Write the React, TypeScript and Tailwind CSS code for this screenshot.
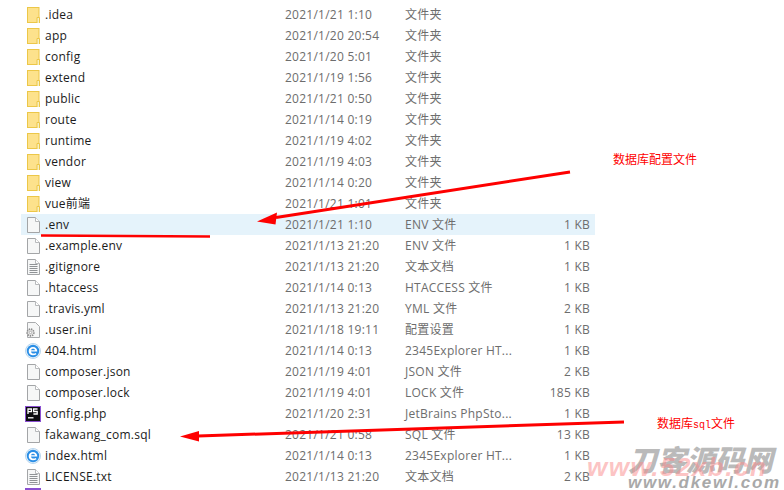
import type { ReactNode } from 'react';

type IconKind = 'folder' | 'blank' | 'text' | 'gear' | 'ie' | 'ps';

type FileRow = {
  name: string;
  date: string;
  type: string;
  size?: string;
  icon: IconKind;
};

const FOLDER = '文件夹';

const files: FileRow[] = [
  { name: '.idea', date: '2021/1/21 1:10', type: FOLDER, icon: 'folder' },
  { name: 'app', date: '2021/1/20 20:54', type: FOLDER, icon: 'folder' },
  { name: 'config', date: '2021/1/20 5:01', type: FOLDER, icon: 'folder' },
  { name: 'extend', date: '2021/1/19 1:56', type: FOLDER, icon: 'folder' },
  { name: 'public', date: '2021/1/21 0:50', type: FOLDER, icon: 'folder' },
  { name: 'route', date: '2021/1/14 0:19', type: FOLDER, icon: 'folder' },
  { name: 'runtime', date: '2021/1/19 4:02', type: FOLDER, icon: 'folder' },
  { name: 'vendor', date: '2021/1/19 4:03', type: FOLDER, icon: 'folder' },
  { name: 'view', date: '2021/1/14 0:20', type: FOLDER, icon: 'folder' },
  { name: 'vue前端', date: '2021/1/21 1:01', type: FOLDER, icon: 'folder' },
  { name: '.env', date: '2021/1/21 1:10', type: 'ENV 文件', size: '1 KB', icon: 'blank' },
  { name: '.example.env', date: '2021/1/13 21:20', type: 'ENV 文件', size: '1 KB', icon: 'blank' },
  { name: '.gitignore', date: '2021/1/13 21:20', type: '文本文档', size: '1 KB', icon: 'text' },
  { name: '.htaccess', date: '2021/1/14 0:13', type: 'HTACCESS 文件', size: '1 KB', icon: 'blank' },
  { name: '.travis.yml', date: '2021/1/13 21:20', type: 'YML 文件', size: '2 KB', icon: 'blank' },
  { name: '.user.ini', date: '2021/1/18 19:11', type: '配置设置', size: '1 KB', icon: 'gear' },
  { name: '404.html', date: '2021/1/14 0:13', type: '2345Explorer HT...', size: '1 KB', icon: 'ie' },
  { name: 'composer.json', date: '2021/1/19 4:01', type: 'JSON 文件', size: '2 KB', icon: 'blank' },
  { name: 'composer.lock', date: '2021/1/19 4:01', type: 'LOCK 文件', size: '185 KB', icon: 'blank' },
  { name: 'config.php', date: '2021/1/20 2:31', type: 'JetBrains PhpSto...', size: '1 KB', icon: 'ps' },
  { name: 'fakawang_com.sql', date: '2021/1/21 0:58', type: 'SQL 文件', size: '13 KB', icon: 'blank' },
  { name: 'index.html', date: '2021/1/14 0:13', type: '2345Explorer HT...', size: '1 KB', icon: 'ie' },
  { name: 'LICENSE.txt', date: '2021/1/13 21:20', type: '文本文档', size: '2 KB', icon: 'text' },
];

function Sheet({ children }: { children?: ReactNode }) {
  return (
    <svg width="14" height="16" viewBox="0 0 14 16" className="shrink-0">
      <path d="M.5 .5H8.5L12.5 4.5V15.5H.5Z" fill="#f6f7f7" stroke="#a3a5a7" />
      <path d="M8.5 .5V4.5H12.5" fill="#fff" stroke="#b8babc" />
      {children}
    </svg>
  );
}

function FileIcon({ kind }: { kind: IconKind }) {
  if (kind === 'folder') {
    return (
      <svg width="14" height="16" viewBox="0 0 14 16" className="shrink-0">
        <rect x=".5" y=".5" width="11.5" height="15" fill="#fde28c" stroke="#ecc748" />
        <path d="M10 16V10.5H12.5V16" fill="#f7f0c4" stroke="#ecc748" />
      </svg>
    );
  }
  if (kind === 'text') {
    return (
      <Sheet>
        <path d="M2.5 5.5H10.5M2.5 7.5H10.5M2.5 9.5H10.5M2.5 11.5H10.5M2.5 13.5H10.5" stroke="#8f9295" />
      </Sheet>
    );
  }
  if (kind === 'gear') {
    return (
      <svg width="16" height="16" viewBox="0 0 16 16" className="shrink-0 -ml-[2px]">
        <path d="M2.5 .5H10.5L14.5 4.5V15.5H2.5Z" fill="#f6f7f7" stroke="#a9abad" />
        <circle cx="5.5" cy="10.5" r="3.4" fill="#e4e4e4" stroke="#8b8b8b" strokeWidth="1.6" strokeDasharray="1.4 .9" />
        <circle cx="5.5" cy="10.5" r="1.2" fill="#fff" stroke="#9a9a9a" strokeWidth=".7" />
      </svg>
    );
  }
  if (kind === 'ie') {
    return (
      <svg width="16" height="16" viewBox="0 0 16 16" className="shrink-0 -ml-[2px]">
        <circle cx="8" cy="8" r="7.5" fill="#e4f1fb" stroke="#b9d6ee" />
        <circle cx="8" cy="8" r="6.2" fill="#2a8ee6" />
        <path d="M3.8 8.6H12.3C12.4 5.6 10.4 3.9 8 3.9C5.5 3.9 3.7 5.7 3.7 8.2C3.7 10.7 5.6 12.3 8 12.3C9.4 12.3 10.6 11.9 11.5 11.2L10.8 9.9C9.1 11 6.3 11 6 8.6M6 7.2C6.3 5.2 9.8 5.2 10.1 7.2Z" fill="#fff" fillRule="evenodd" />
      </svg>
    );
  }
  if (kind === 'ps') {
    return (
      <svg width="16" height="16" viewBox="0 0 16 16" className="shrink-0 -ml-[2px]">
        <rect x=".5" y=".5" width="15" height="15" fill="#0c0c10" stroke="#8a4fd0" />
        <path d="M3 8V3H6.4V5.6H3M12.6 3H8.6V5.5H12.2V8H8.4" fill="none" stroke="#fff" strokeWidth="1.3" />
        <path d="M3 11.8H8.5" stroke="#fff" strokeWidth="1.3" />
      </svg>
    );
  }
  return <Sheet />;
}

function Row({ file, selected }: { file: FileRow; selected: boolean }) {
  return (
    <div className={`flex h-[21px] w-[574px] items-center ${selected ? 'bg-[#e5f3fb]' : ''}`}>
      <div className="flex w-[264px] items-center pl-[6px]">
        <div className="flex w-[18px]">
          <FileIcon kind={file.icon} />
        </div>
        <span className="text-[#1b1b1b]">{file.name}</span>
      </div>
      <span className="w-[120px] text-[#6d6d6d]">{file.date}</span>
      <span className="w-[108px] text-[#6d6d6d] whitespace-nowrap">{file.type}</span>
      <span className="w-[77px] text-right text-[#6d6d6d]">{file.size}</span>
    </div>
  );
}

export default function App() {
  return (
    <div
      className="relative h-[490px] w-[784px] overflow-hidden bg-white text-[12px] leading-[21px] tracking-[0.25px]"
      style={{ fontFamily: '"Open Sans", "Noto Sans CJK SC", sans-serif' }}
    >
      <div className="flex flex-col pl-[21px] pt-[4px]">
        {files.map((file) => (
          <Row key={file.name} file={file} selected={file.name === '.env'} />
        ))}
        <div className="ml-[4px] mt-[1px] h-[2px] w-[16px] bg-[#8a4fd0]" />
      </div>

      {/* red annotations drawn on top of the screenshot */}
      <svg width="784" height="490" className="absolute left-0 top-0">
        <path d="M570 172L276 217.5" stroke="#fe0000" strokeWidth="3" />
        <path d="M257 221.5L277 212.5L275.5 224.5Z" fill="#fe0000" />
        <path d="M41 235.5L210 236.5" stroke="#fe0000" strokeWidth="2.6" />
        <path d="M624 422L198 436" stroke="#fe0000" strokeWidth="3" />
        <path d="M180 436.5L199 431L199 441.5Z" fill="#fe0000" />
      </svg>
      <span
        className="absolute left-[613px] top-[148px] text-[12px] tracking-normal text-[#fe0000] whitespace-nowrap"
        style={{ fontFamily: '"Noto Sans CJK SC", sans-serif' }}
      >
        数据库配置文件
      </span>
      <span
        className="absolute left-[657px] top-[412px] text-[12px] tracking-normal text-[#fe0000] whitespace-nowrap"
        style={{ fontFamily: '"Noto Sans CJK SC", sans-serif' }}
      >
        数据库
        <span className="text-[10px]" style={{ fontFamily: '"Liberation Mono", monospace' }}>
          sql
        </span>
        文件
      </span>

      {/* watermark */}
      <span
        className="absolute left-[628px] top-[440px] text-[29px] leading-[36px] tracking-normal font-black italic text-[#8c8c8c]/60 whitespace-nowrap"
        style={{ fontFamily: '"Noto Sans CJK SC", sans-serif' }}
      >
        刀客源码网
      </span>
      <span
        className="absolute left-[587px] top-[453px] text-[26px] leading-[28px] font-bold italic text-[#f98a8a]/50 tracking-[1.5px] whitespace-nowrap"
        style={{ fontFamily: '"Liberation Sans", sans-serif' }}
      >
        www.52xb.cn
      </span>
      <span
        className="absolute left-[628px] top-[476px] text-[17px] leading-[14px] font-bold italic text-[#a9a9a9] tracking-[1.7px] whitespace-nowrap"
        style={{ fontFamily: '"Liberation Sans", sans-serif' }}
      >
        www.dkewl.com
      </span>
    </div>
  );
}
